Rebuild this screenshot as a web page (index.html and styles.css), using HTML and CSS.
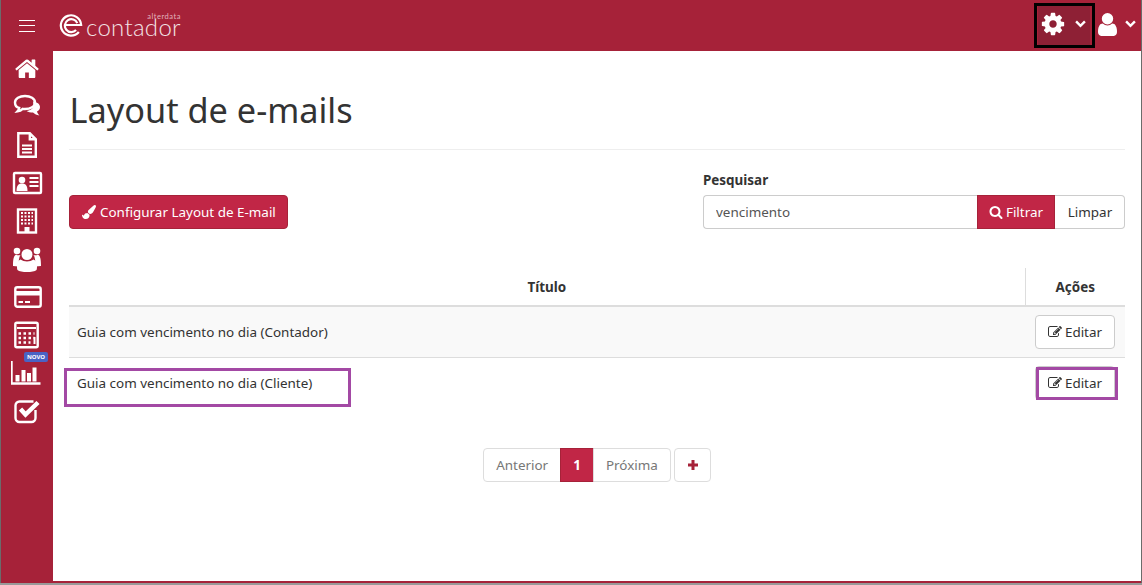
FILE: index.html
```html
<!DOCTYPE html>
<html lang="pt-BR">
<head>
<meta charset="utf-8">
<title>Layout de e-mails</title>
<link rel="stylesheet" href="styles.css">
</head>
<body>
<div class="app">
  <header class="topbar">
    <div class="burger"><span></span><span></span><span></span></div>
    <div class="logo">
      <svg class="logo-mark" viewBox="0 0 26 26"><path d="M21.500 20.500A11 11 0 1 1 24 13H6.500M18.500 18.500A7 7 0 1 1 19.800 11" fill="none" stroke="#fff" stroke-width="2.400"/></svg>
      <div class="logo-text"><span class="logo-small">alterdata</span><span class="logo-name">contador</span></div>
    </div>
    <div class="top-actions">
      <button class="top-btn gear-btn">
        <svg class="gear" viewBox="0 0 1792 1792"><path d="M1152 896q0-106-75-181t-181-75-181 75-75 181 75 181 181 75 181-75 75-181zm512-109v222q0 12-8 23t-20 13l-185 28q-19 54-39 91 35 50 107 138 10 12 10 25t-9 23q-27 37-99 108t-94 71q-12 0-26-9l-138-108q-44 23-91 38-16 136-29 186-7 28-36 28h-222q-14 0-24.500-8.500t-11.500-21.500l-28-184q-49-16-90-37l-141 107q-10 9-25 9-14 0-25-11-126-114-165-168-7-10-7-23 0-12 8-23 15-21 51-66.500t54-70.500q-27-50-41-99l-183-27q-13-2-21-12.500t-8-23.500v-222q0-12 8-23t19-13l186-28q14-46 39-92-40-57-107-138-10-12-10-24 0-10 9-23 26-36 98.500-107.500t94.500-71.500q13 0 26 10l138 107q44-23 91-38 16-136 29-186 7-28 36-28h222q14 0 24.500 8.500t11.500 21.500l28 184q49 16 90 37l142-107q9-9 24-9 13 0 25 10 129 119 165 170 7 8 7 22 0 12-8 23-15 21-51 66.500t-54 70.500q26 50 41 98l183 28q13 2 21 12.500t8 23.500z"/></svg>
        <svg class="chev" viewBox="0 0 10 7"><path d="M1 1.200 5 5.200 9 1.200"/></svg>
      </button>
      <button class="top-btn user-btn">
        <svg class="user" viewBox="256 128 1280 1536"><path d="M1536 1399q0 109-62.500 187t-150.500 78h-854q-88 0-150.500-78t-62.500-187q0-85 8.500-160.500t31.500-152 58.500-131 94-89 134.500-34.500q131 128 313 128t313-128q76 0 134.500 34.500t94 89 58.500 131 31.500 152 8.500 160.500zm-256-887q0 159-112.500 271.500t-271.500 112.500-271.500-112.500-112.500-271.500 112.500-271.500 271.500-112.500 271.500 112.500 112.500 271.500z"/></svg>
        <svg class="chev" viewBox="0 0 10 7"><path d="M1 1.200 5 5.200 9 1.200"/></svg>
      </button>
    </div>
  </header>
  <div class="body-row">
    <nav class="sidebar">
      <a class="nav-item"><svg viewBox="-275 -195 2215 2215"><path class="fill" d="M1408 992v480q0 26-19 45t-45 19h-384v-384h-256v384h-384q-26 0-45-19t-19-45v-480q0-1 .5-3t.5-3l575-474 575 474q1 2 1 6zm223-69l-62 74q-8 9-21 11h-3q-13 0-21-7l-692-577-692 577q-12 8-24 7-13-2-21-11l-62-74q-8-10-7-23.500t11-21.500l719-599q32-26 76-26t76 26l244 204v-195q0-14 9-23t23-9h192q14 0 23 9t9 23v408l219 182q10 8 11 21.500t-7 23.500z"/></svg></a>
      <a class="nav-item"><svg viewBox="0 0 32 32"><path class="fill" d="M22 10.500c4 .5 7 2.500 7 5.500 0 2-1.200 3.600-3 4.600.3 1.500 1.200 2.800 2.400 3.900-2.600-.3-4.800-1.300-6.400-2.900-2.500 0-4.700-.5-6.400-1.600 4-.5 7-2.900 7-6z"/><path class="line" d="M14 5.500c5.500 0 10 2.600 10 6.500s-4.500 6.500-10 6.500c-.8 0-1.600 0-2.300-.2-1.400 1.400-3.200 2.300-5.200 2.600.9-1 1.500-2.200 1.700-3.500C5.400 16.800 4 14.600 4 12c0-3.900 4.500-6.500 10-6.500z" transform="translate(0 -.5)"/></svg></a>
      <a class="nav-item"><svg viewBox="0 0 32 32"><path class="line" d="M7.300 4.300h11.500l6 6v17.400H7.300zM18.800 4.300v6h6"/><path class="bars" d="M11 16.500h10M11 20h10M11 23.500h10"/></svg></a>
      <a class="nav-item"><svg viewBox="0 0 32 32"><rect class="line" x="3" y="6" width="27" height="20" rx="1"/><circle class="fill" cx="11" cy="13" r="3.300"/><path class="fill" d="M5.500 24c0-5 1.500-7.500 5.500-7.500s5.500 2.500 5.500 7.500z"/><path class="bars" d="M18.500 11h9M18.500 15h9M18.500 19h9"/></svg></a>
      <a class="nav-item"><svg viewBox="0 0 32 32"><rect class="line" x="7" y="4.500" width="18" height="23"/><path class="dots" d="M10 8h12M10 11.500h12M10 15h12M10 18.500h12"/><rect class="fill" x="13.500" y="22" width="5" height="5"/></svg></a>
      <a class="nav-item"><svg viewBox="0 0 32 32"><circle class="fill" cx="6" cy="8" r="3.300"/><circle class="fill" cx="26" cy="8" r="3.300"/><circle class="fill" cx="16" cy="11.500" r="5.500"/><path class="fill" d="M2 23c0-6 .5-10 3-11.500 1.500 1 3 1 4.500.5-1.500 2-2 6-2 11.500zM30 23c0-6-.5-10-3-11.500-1.500 1-3 1-4.500.5 1.500 2 2 6 2 11.500z"/><path class="fill" d="M6.500 27c-.5-1-.5-2.500-.5-4.500 0-3 1-5 3.500-6 3.500 2.500 9.500 2.500 13 0 2.500 1 3.500 3 3.500 6 0 2 0 3.500-.5 4.500-3 2.700-16 2.700-19 0z"/></svg></a>
      <a class="nav-item"><svg viewBox="0 0 32 32"><rect class="line" x="4.300" y="6.300" width="25.400" height="19.400" rx="2"/><rect class="fill" x="4.300" y="10" width="25.400" height="4.500"/><path class="bars" d="M7.500 21h4.500M14 21h5"/></svg></a>
      <a class="nav-item"><svg viewBox="0 0 32 32"><rect class="line" x="4.300" y="3.800" width="22.400" height="24.400" rx="1.500"/><path class="bars" d="M6 9h19"/><path class="dots wide" d="M7.500 14.500h16M7.500 19h16M7.500 23.500h12"/><path class="bars" d="M23.500 18v7"/></svg></a>
      <a class="nav-item"><svg viewBox="0 0 32 32"><path class="line" d="M.5 4v22.500h29"/><rect class="fill" x="4.500" y="18" width="4" height="6.500"/><rect class="fill" x="10.500" y="13" width="4" height="11.500"/><rect class="fill" x="16" y="16" width="4" height="8.500"/><rect class="fill" x="21.500" y="10.500" width="4" height="14"/></svg><span class="badge">NOVO</span></a>
      <a class="nav-item"><svg viewBox="0 0 32 32"><path class="line" d="M24.500 15v8a4 4 0 0 1-4 4h-12a4 4 0 0 1-4-4V10.500a4 4 0 0 1 4-4h14"/><path class="tick" d="M9.500 14l5 5.500L27 7.500"/></svg></a>
    </nav>
    <main class="content">
      <h1 class="page-title">Layout de e-mails</h1>
      <section class="toolbar">
        <button class="btn btn-primary btn-config">
          <svg class="ico" viewBox="0 0 1792 1792"><path d="M1615 0q70 0 122.500 46.500t52.500 116.500q0 63-45 151-332 629-465 752-97 91-218 91-126 0-216.500-92.500t-90.500-219.500q0-128 92-212l638-579q59-54 130-54zm-909 1034q39 76 106.500 130t150.500 76l1 71q4 213-129.500 347t-348.500 134q-123 0-218-46.500t-152.500-127.500-86.500-183-29-220q7 5 41 30t62 44.500 59 36.500 46 17q41 0 55-37 25-66 57.500-112.500t69.500-76 88-47.500 103-25.500 125-10.500z"/></svg>
          Configurar Layout de E-mail
        </button>
        <form class="search">
          <label class="search-label" for="q">Pesquisar</label>
          <div class="input-group">
            <input id="q" class="search-input" value="vencimento">
            <button type="button" class="btn btn-primary btn-join">
              <svg class="ico" viewBox="0 0 1792 1792"><path d="M1216 832q0-185-131.500-316.500t-316.500-131.500-316.500 131.500-131.500 316.500 131.500 316.500 316.500 131.500 316.500-131.500 131.500-316.500zm512 832q0 52-38 90t-90 38q-54 0-90-38l-343-342q-179 124-399 124-143 0-273.500-55.500t-225-150-150-225-55.500-273.500 55.500-273.500 150-225 225-150 273.500-55.500 273.500 55.500 225 150 150 225 55.500 273.500q0 220-124 399l343 343q37 37 37 90z"/></svg>
              Filtrar
            </button>
            <button type="button" class="btn btn-default btn-end">Limpar</button>
          </div>
        </form>
      </section>
      <table class="grid">
        <thead>
          <tr><th>Título</th><th class="col-actions">Ações</th></tr>
        </thead>
        <tbody>
          <tr class="odd"><td>Guia com vencimento no dia (Contador)</td><td class="col-actions"><button class="btn btn-default btn-edit"><svg class="ico" viewBox="0 0 1792 1792"><path d="M888 1184l116-116-152-152-116 116v56h96v96h56zm440-720q-16-16-33 1l-350 350q-17 17-1 33t33-1l350-350q17-17 1-33zm80 594v190q0 119-84.500 203.500t-203.500 84.500h-832q-119 0-203.500-84.500t-84.500-203.500v-832q0-119 84.500-203.500t203.500-84.500h832q63 0 117 25 15 7 18 23 3 17-9 29l-49 49q-14 14-32 8-23-6-45-6h-832q-66 0-113 47t-47 113v832q0 66 47 113t113 47h832q66 0 113-47t47-113v-126q0-13 9-22l64-64q15-15 35-7t20 29zm-96-738l288 288-672 672h-288v-288zm444 132l-92 92-288-288 92-92q28-28 68-28t68 28l152 152q28 28 28 68t-28 68z"/></svg> Editar</button></td></tr>
          <tr><td>Guia com vencimento no dia (Cliente)</td><td class="col-actions"><button class="btn btn-default btn-edit"><svg class="ico" viewBox="0 0 1792 1792"><path d="M888 1184l116-116-152-152-116 116v56h96v96h56zm440-720q-16-16-33 1l-350 350q-17 17-1 33t33-1l350-350q17-17 1-33zm80 594v190q0 119-84.500 203.500t-203.500 84.500h-832q-119 0-203.500-84.500t-84.500-203.500v-832q0-119 84.500-203.500t203.500-84.500h832q63 0 117 25 15 7 18 23 3 17-9 29l-49 49q-14 14-32 8-23-6-45-6h-832q-66 0-113 47t-47 113v832q0 66 47 113t113 47h832q66 0 113-47t47-113v-126q0-13 9-22l64-64q15-15 35-7t20 29zm-96-738l288 288-672 672h-288v-288zm444 132l-92 92-288-288 92-92q28-28 68-28t68 28l152 152q28 28 28 68t-28 68z"/></svg> Editar</button></td></tr>
        </tbody>
      </table>
      <div class="pager-row">
        <div class="pager">
          <a class="page-link">Anterior</a>
          <a class="page-link current">1</a>
          <a class="page-link">Próxima</a>
        </div>
        <a class="page-plus"><svg viewBox="0 0 12 12"><path d="M4.500 1h3v3.500H11v3H7.500V11h-3V7.500H1v-3h3.500z"/></svg></a>
      </div>
    </main>
  </div>
</div>
<div class="mark mark-gear"></div>
<div class="mark mark-row"></div>
<div class="mark mark-edit"></div>
</body>
</html>
```
FILE: styles.css
```css
* { box-sizing: border-box; }
html, body { margin: 0; height: 100%; overflow: hidden; }
body {
  background: #999;
  font-family: "Noto Sans", "Open Sans", sans-serif;
  font-size: 13.450px;
  color: #333;
  position: relative;
}
.app {
  height: 583px;
  border-left: 1px solid #6b6b6b;
  border-right: 1px solid #6b6b6b;
  background: #a62239;
  display: flex;
  flex-direction: column;
}
.topbar { height: 51px; flex: none; display: flex; align-items: center; }
.burger { width: 16px; margin-left: 18px; display: flex; flex-direction: column; gap: 4.500px; }
.burger span { height: 1px; background: #fff; }
.logo { margin-left: 24px; display: flex; align-items: flex-start; }
.logo-mark { width: 24px; height: 24px; display: block; margin-top: -1px; }
.logo-text { margin-left: 3px; display: flex; flex-direction: column; align-items: flex-end; }
.logo-small { font-family: Lato, sans-serif; font-size: 7.500px; line-height: 6px; color: #e2b3bd; letter-spacing: .5px; }
.logo-name { font-family: Lato, sans-serif; font-weight: 300; font-size: 24px; line-height: 18px; color: #f3e3e6; letter-spacing: .3px; margin: -2px 0 2px; }
.top-actions { margin-left: auto; display: flex; height: 100%; }
.top-btn { border: 0; background: none; padding: 0; display: flex; align-items: center; }
.gear-btn { width: 52px; height: 45px; margin-top: 3px; background: #8e2035; padding: 0 0 3px 2px; }
.user-btn { margin-left: 7px; width: 44px; padding-bottom: 3px; }
.gear { width: 26px; height: 26px; fill: #fff; display: block; }
.user { width: 19px; height: 23px; fill: #fff; display: block; margin-left: 1px; }
.chev { width: 11px; height: 8px; display: block; }
.gear-btn .chev { margin-left: 9px; }
.user-btn .chev { margin-left: 8px; }
.chev path { fill: none; stroke: #fff; stroke-width: 2.200; }
.body-row { flex: 1; display: flex; min-height: 0; }
.sidebar { width: 52px; flex: none; display: flex; flex-direction: column; }
.nav-item { height: 38px; flex: none; display: flex; align-items: center; justify-content: center; position: relative; }
.nav-item svg { width: 32px; height: 32px; display: block; margin-top: -2px; margin-right: 1px; }
.fill { fill: #fff; }
.line { fill: none; stroke: #fff; stroke-width: 2.400; }
.bars { fill: none; stroke: #fff; stroke-width: 2; }
.dots { fill: none; stroke: #fff; stroke-width: 2; stroke-dasharray: 2 1.500; }
.dots.wide { stroke-width: 2.500; stroke-dasharray: 2.500 2.500; }
.tick { fill: none; stroke: #fff; stroke-width: 4.500; }
.badge {
  position: absolute; left: 23px; top: -3px;
  width: 24px; height: 10px; border-radius: 2px;
  background: #4a63c4; color: #fff;
  font-size: 6px; font-weight: 700; line-height: 10px; text-align: center;
}
.content { flex: 1; background: #fff; margin-bottom: 2px; padding: 0 16px; min-width: 0; }
.page-title {
  margin: 35px 0 0; height: 64px; padding: 0 0 15px .5px;
  border-bottom: 1px solid #eee;
  font-size: 34.300px; font-weight: 400; line-height: 47px; color: #333;
}
.toolbar { margin-top: 22px; display: flex; justify-content: space-between; align-items: flex-end; }
.btn {
  height: 34px; padding: 0 12px; border: 1px solid #ccc; border-radius: 4px;
  font: inherit; background: #fff; color: #333;
  display: inline-flex; align-items: center; justify-content: center; gap: 3px;
  white-space: nowrap;
}
.btn-primary { background: #c12646; border-color: #a62239; color: #fff; }
.btn-config { gap: 4px; padding-right: 11px; }
.ico { width: 14px; height: 14px; fill: currentColor; display: block; flex: none; }
.search { width: 422px; }
.search-label { display: block; font-weight: 700; line-height: 17px; margin-bottom: 6px; }
.input-group { display: flex; }
.search-input {
  flex: 1; min-width: 0; height: 34px; padding: 0 12px;
  border: 1px solid #ccc; border-right: 0; border-radius: 4px 0 0 4px;
  font: inherit; color: #555; outline: 0;
}
.btn-join { width: 78px; padding: 0; border-radius: 0; }
.btn-end { width: 70px; padding: 0 0 0 1px; border-left: 0; border-radius: 0 4px 4px 0; }
.btn-edit { width: 80px; padding: 0 0 0 1px; }
.grid { width: 100%; margin-top: 39px; border-collapse: collapse; table-layout: fixed; }
.grid th { height: 38px; padding: 0 8px; text-align: center; font-weight: 700; border-bottom: 2px solid #ddd; }
.grid td { height: 51px; padding: 0 8px; border-bottom: 1px solid #ddd; }
.grid tbody tr:last-child td { border-bottom: 0; height: 52px; }
.grid .col-actions { width: 100px; text-align: center; }
.grid td.col-actions { padding: 0 10px 0 9px; }
.grid th.col-actions { border-left: 1px solid #ddd; }
.odd td { background: #f9f9f9; }
.pager-row { margin-top: 39px; display: flex; justify-content: center; gap: 3px; }
.pager { display: flex; }
.page-link {
  height: 34px; padding: 0 12px; border: 1px solid #ddd; margin-left: -1px;
  color: #777; background: #fff; display: flex; align-items: center;
}
.page-link:first-child { border-radius: 4px 0 0 4px; margin-left: 0; }
.page-link:last-child { border-radius: 0 4px 4px 0; }
.page-link.current { background: #c12646; border-color: #a62239; color: #fff; font-weight: 700; }
.page-plus {
  width: 37px; height: 34px; padding-left: 1px; border: 1px solid #ddd; border-radius: 4px;
  display: flex; align-items: center; justify-content: center;
}
.page-plus svg { width: 12px; height: 12px; fill: #a62239; display: block; }
.mark { position: absolute; pointer-events: none; border-style: solid; }
.mark-gear { left: 1034px; top: 3px; width: 61px; height: 45px; border-width: 3px; border-color: #000; }
.mark-row { left: 64px; top: 368px; width: 287px; height: 39px; border-width: 3px; border-color: #a349a4; }
.mark-edit { left: 1036px; top: 367px; width: 82px; height: 33px; border-width: 3px; border-color: #a349a4; }
```
